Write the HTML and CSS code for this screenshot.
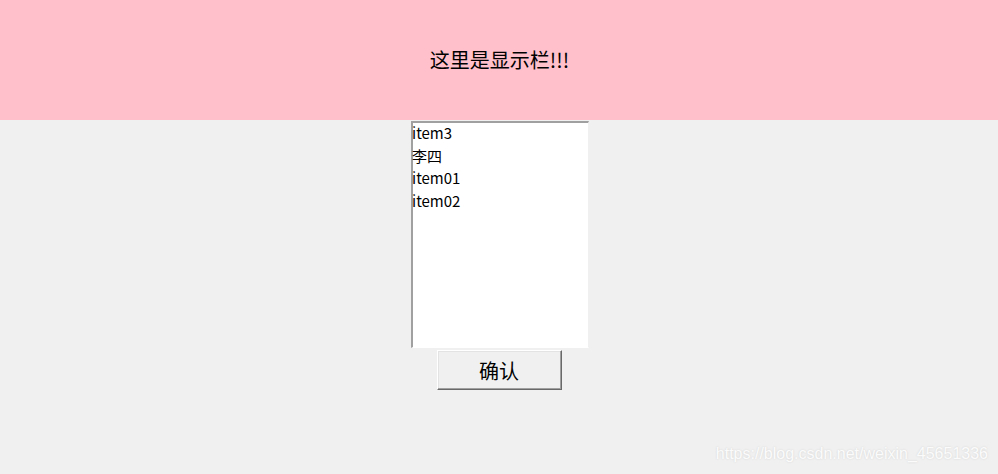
FILE: index.html
```html
<!DOCTYPE html>
<html lang="zh">
<head>
<meta charset="utf-8">
<title>显示栏</title>
<link rel="stylesheet" href="styles.css">
</head>
<body>
<div class="window">
  <header class="display">这里是显示栏!!!</header>
  <main class="panel">
    <ul class="listbox">
      <li>item3</li>
      <li>李四</li>
      <li>item01</li>
      <li>item02</li>
    </ul>
    <button class="confirm" type="button">确认</button>
  </main>
  <div class="watermark">https://blog.csdn.net/weixin_45651336</div>
</div>
</body>
</html>
```
FILE: styles.css
```css
html, body {
  margin: 0;
  padding: 0;
}
body {
  background: #f0f0f0;
  font-family: "Noto Sans CJK SC", "Noto Sans", sans-serif;
  color: #000;
}
.window {
  position: relative;
  width: 998px;
  height: 474px;
  overflow: hidden;
  background: #f0f0f0;
}
.display {
  height: 120px;
  background: #ffc0cb;
  display: flex;
  align-items: center;
  justify-content: center;
  font-size: 20px;
  padding-left: 1px;
  padding-bottom: 2px;
  box-sizing: border-box;
}
.panel {
  display: flex;
  flex-direction: column;
  align-items: center;
  padding-top: 1px;
  padding-left: 2px;
}
.listbox {
  list-style: none;
  margin: 0;
  padding: 0;
  width: 178px;
  height: 227px;
  box-sizing: border-box;
  background: #fff;
  border-top: 2px solid #a0a0a0;
  border-left: 2px solid #a0a0a0;
  border-right: 1px solid #f0f0f0;
  border-bottom: 1px solid #ffffff;
  font-size: 15px;
  line-height: 22.7px;
}
.listbox li {
  margin-left: -1px;
  margin-top: -1px;
  margin-bottom: 1px;
}
.confirm {
  margin-top: 2px;
  margin-left: -2px;
  width: 125px;
  height: 40px;
  box-sizing: border-box;
  background: #f0f0f0;
  border-top: 1px solid #ffffff;
  border-left: 1px solid #ffffff;
  border-right: 1px solid #696969;
  border-bottom: 1px solid #696969;
  box-shadow: inset -1px -1px 0 #a0a0a0, inset 1px 1px 0 #e3e3e3;
  font-family: "Noto Sans CJK SC", sans-serif;
  font-size: 20px;
  color: #000;
  padding: 0;
}
.watermark {
  position: absolute;
  right: 10px;
  bottom: 11px;
  font-family: "Liberation Sans", Arial, sans-serif;
  font-size: 16px;
  color: #fbfbfb;
  text-shadow: 0 0 2px #d0d0d0;
}
```
